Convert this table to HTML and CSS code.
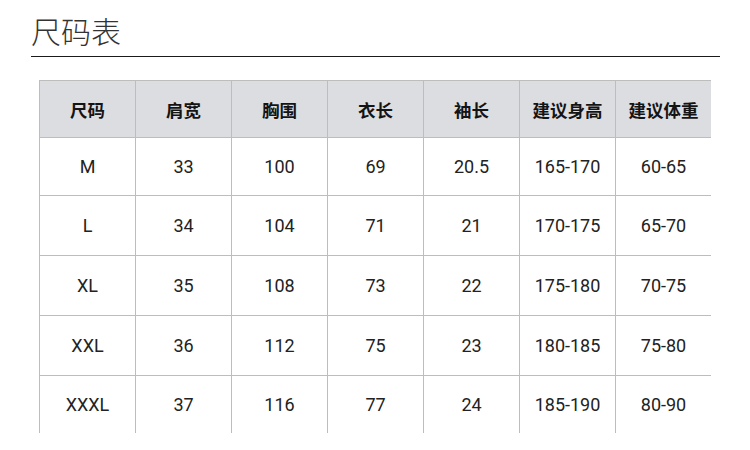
FILE: index.html
```html
<!DOCTYPE html>
<html lang="zh">
<head>
<meta charset="utf-8">
<link rel="stylesheet" href="styles.css">
</head>
<body>
<div class="page">
  <h1 class="title">尺码表</h1>
  <div class="table">
    <div class="cell head">尺码</div><div class="cell head">肩宽</div><div class="cell head">胸围</div><div class="cell head">衣长</div><div class="cell head">袖长</div><div class="cell head">建议身高</div><div class="cell head">建议体重</div>
    <div class="cell">M</div><div class="cell">33</div><div class="cell">100</div><div class="cell">69</div><div class="cell">20.5</div><div class="cell">165-170</div><div class="cell">60-65</div>
    <div class="cell">L</div><div class="cell">34</div><div class="cell">104</div><div class="cell">71</div><div class="cell">21</div><div class="cell">170-175</div><div class="cell">65-70</div>
    <div class="cell">XL</div><div class="cell">35</div><div class="cell">108</div><div class="cell">73</div><div class="cell">22</div><div class="cell">175-180</div><div class="cell">70-75</div>
    <div class="cell">XXL</div><div class="cell">36</div><div class="cell">112</div><div class="cell">75</div><div class="cell">23</div><div class="cell">180-185</div><div class="cell">75-80</div>
    <div class="cell">XXXL</div><div class="cell">37</div><div class="cell">116</div><div class="cell">77</div><div class="cell">24</div><div class="cell">185-190</div><div class="cell">80-90</div>
  </div>
</div>
</body>
</html>
```
FILE: styles.css
```css
html, body {
  margin: 0;
  padding: 0;
  background: #ffffff;
}
.page {
  width: 750px;
  height: 450px;
  overflow: hidden;
  font-family: Roboto, "Noto Sans CJK SC", sans-serif;
}
.title {
  margin: 0 0 0 31px;
  width: 689px;
  padding: 12px 0 8px 0;
  line-height: 36px;
  font-size: 30px;
  font-weight: 300;
  color: #333333;
  font-family: "Noto Sans CJK SC", sans-serif;
  border-bottom: 1px solid #1a1a1a;
}
.table {
  margin: 23px 0 0 39px;
  display: grid;
  grid-template-columns: repeat(7, 96px);
  grid-template-rows: 57px 58px 60px 60px 60px 58px;
}
.cell {
  box-sizing: border-box;
  border-left: 1px solid #bdbdbd;
  border-top: 1px solid #bdbdbd;
  display: flex;
  align-items: center;
  justify-content: center;
  font-size: 18px;
  color: #222222;
}
.head {
  background: #dcdde1;
  font-family: "Noto Sans CJK SC", sans-serif;
  font-weight: 700;
  font-size: 17.5px;
  color: #141414;
}
```
